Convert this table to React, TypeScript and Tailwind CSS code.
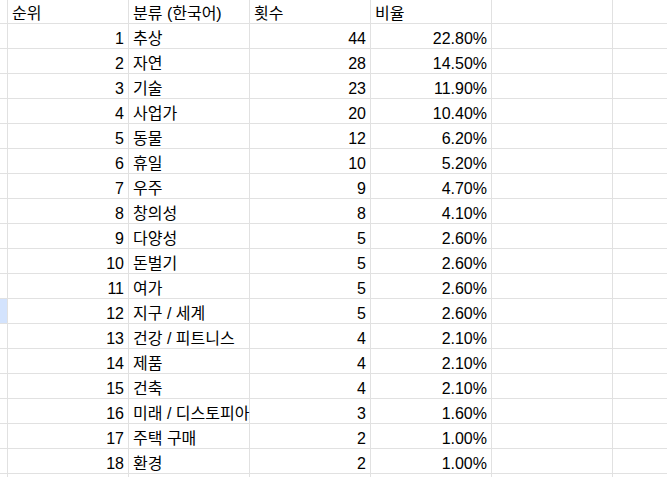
import React from "react";

const rows: [number, string, number, string][] = [
  [1, "추상", 44, "22.80%"],
  [2, "자연", 28, "14.50%"],
  [3, "기술", 23, "11.90%"],
  [4, "사업가", 20, "10.40%"],
  [5, "동물", 12, "6.20%"],
  [6, "휴일", 10, "5.20%"],
  [7, "우주", 9, "4.70%"],
  [8, "창의성", 8, "4.10%"],
  [9, "다양성", 5, "2.60%"],
  [10, "돈벌기", 5, "2.60%"],
  [11, "여가", 5, "2.60%"],
  [12, "지구 / 세계", 5, "2.60%"],
  [13, "건강 / 피트니스", 4, "2.10%"],
  [14, "제품", 4, "2.10%"],
  [15, "건축", 4, "2.10%"],
  [16, "미래 / 디스토피아", 3, "1.60%"],
  [17, "주택 구매", 2, "1.00%"],
  [18, "환경", 2, "1.00%"],
];

const cell =
  "border-r border-b border-[#e1e1e1] flex items-end px-[4px] whitespace-nowrap overflow-visible leading-[18px]";

function Row({
  a,
  b,
  c,
  d,
  e,
  header,
  sel,
}: {
  a?: string;
  b?: string;
  c?: string;
  d?: string;
  e?: string;
  header?: boolean;
  sel?: boolean;
}) {
  const h = header ? "h-[25px]" : "h-[25px]";
  const alignNum = header ? "justify-start" : "justify-end";
  return (
    <>
      <div className={`${h} border-r border-b border-[#e1e1e1] ${sel ? "bg-[#d3e3fd]" : ""}`}>{a}</div>
      <div className={`${h} ${cell} ${alignNum}`}>{b}</div>
      <div className={`${h} ${cell} justify-start`}>{c}</div>
      <div className={`${h} ${cell} ${alignNum}`}>{d}</div>
      <div className={`${h} ${cell} ${alignNum}`}>{e}</div>
      <div className={`${h} ${cell}`}></div>
      <div className={`${h} ${cell}`}></div>
    </>
  );
}

export default function App() {
  return (
    <div
      className="w-[667px] h-[477px] overflow-hidden bg-white text-black text-[16px]"
      style={{ fontFamily: '"Liberation Sans", Arial, "Noto Sans CJK KR", sans-serif' }}
    >
      <div className="grid grid-cols-[8px_121px_121px_121px_121px_121px_200px] -mt-[1px]">
        <Row header b="순위" c="분류 (한국어)" d="횟수" e="비율" />
        {rows.map(([n, name, cnt, pct]) => (
          <Row key={n} b={String(n)} c={name} d={String(cnt)} e={pct} sel={n === 12} />
        ))}
        <Row />
      </div>
    </div>
  );
}
